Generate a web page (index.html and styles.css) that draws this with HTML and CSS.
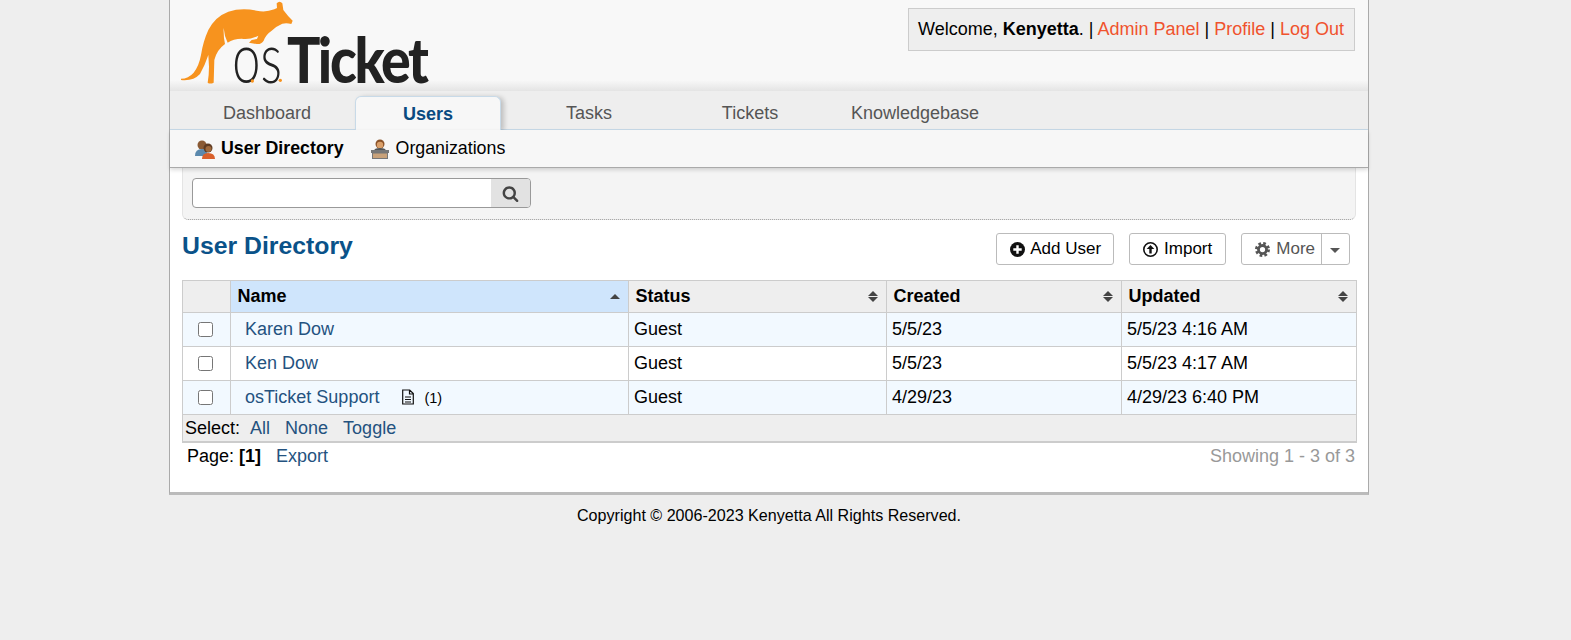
FILE: index.html
```html
<!DOCTYPE html>
<html lang="en">
<head>
  <meta charset="UTF-8">
  <title>osTicket :: User Directory</title>
  <link rel="stylesheet" href="styles.css">
</head>
<body>
  <div id="container">
    <div id="header">
      <svg class="logo" viewBox="0 0 780 273" role="img" aria-label="osTicket">
        <path class="roo" d="M18 236 Q40 236 56 218 Q72 198 78 165 Q84 125 100 90 Q120 50 160 35 Q200 22 245 32 Q272 38 298 28 L306 24 L305 10 Q314 0 322 10 L325 30 Q338 48 353 62 L349 72 Q335 68 322 71 Q305 78 290 92 Q272 104 266 122 Q258 134 245 132 L222 128 L230 120 L246 117 L250 107 Q225 120 200 116 Q175 116 158 128 L150 108 L146 84 Q145 110 150 132 Q125 150 118 180 L116 248 Q105 253 98 248 Q102 225 102 200 L100 165 Q90 195 75 222 Q55 244 18 240 Z"/>
        <text class="logo-os" transform="translate(172 248) scale(0.72 1)">os</text>
        <text class="logo-ticket" transform="translate(336 248) scale(0.885 1)">Ticket</text>
        <circle class="roo" cx="232" cy="243" r="5"/>
        <circle class="roo" cx="316" cy="241" r="5"/>
      </svg>
      <p class="info">Welcome, <strong>Kenyetta</strong>. | <a href="#">Admin Panel</a> | <a href="#">Profile</a> | <a href="#">Log Out</a></p>
    </div>

    <ul id="nav">
      <li><a href="#">Dashboard</a></li>
      <li class="active"><a href="#">Users</a></li>
      <li><a href="#">Tasks</a></li>
      <li><a href="#">Tickets</a></li>
      <li><a href="#">Knowledgebase</a></li>
    </ul>

    <ul id="sub_nav">
      <li class="active">
        <svg class="nav-icon" viewBox="0 0 22 20">
          <circle cx="8" cy="6" r="4.500" fill="#8a5a34"/>
          <path d="M1 17 Q1 10 8 10 Q12 10 13 14 L13 17 Z" fill="#5b89ad"/>
          <circle cx="14" cy="9" r="4.500" fill="#5f3b22"/>
          <circle cx="14.500" cy="10" r="3" fill="#a06a3c"/>
          <path d="M8 20 Q8 14 14 14 Q21 14 21 20 Z" fill="#d9602b"/>
        </svg>
        <a href="#">User Directory</a>
      </li>
      <li>
        <svg class="nav-icon" viewBox="0 0 22 20">
          <circle cx="11" cy="5" r="4.500" fill="#8a5228"/>
          <circle cx="11" cy="6" r="3.200" fill="#dba06a"/>
          <path d="M5 12 Q5 9 11 9 Q17 9 17 12 Z" fill="#555"/>
          <rect x="2" y="11" width="18" height="3" fill="#777"/>
          <rect x="3.500" y="14" width="15" height="5.500" fill="#c9a27a" stroke="#777"/>
        </svg>
        <a href="#">Organizations</a>
      </li>
    </ul>

    <div id="content">
      <div class="search-bar">
        <form class="search-box">
          <input type="text" class="search-input">
          <button type="button" class="search-btn">
            <svg class="icon" viewBox="0 0 1792 1792"><path d="M1216 832q0-185-131.500-316.500t-316.500-131.500-316.500 131.500-131.500 316.500 131.500 316.500 316.500 131.500 316.500-131.500 131.500-316.500zm512 832q0 52-38 90t-90 38q-54 0-90-38l-343-342q-179 124-399 124-143 0-273.500-55.500t-225-150-150-225-55.500-273.500 55.500-273.500 150-225 225-150 273.500-55.500 273.500 55.500 225 150 150 225 55.500 273.500q0 220-124 399l343 343q37 37 37 90z"/></svg>
          </button>
        </form>
      </div>

      <div class="title-row">
        <h2>User Directory</h2>
        <div class="actions">
          <a class="button btn-add" href="#">
            <svg class="icon" viewBox="0.500 0.500 15 15"><circle cx="8" cy="8" r="7.500"/><path class="cut" d="M6.800 3.800h2.400v3h3v2.400h-3v3H6.800v-3h-3V6.800h3z"/></svg>
            Add User
          </a>
          <a class="button" href="#">
            <svg class="icon" viewBox="0.500 0.500 15 15"><path fill-rule="evenodd" d="M8 .5a7.500 7.500 0 1 0 0 15 7.500 7.500 0 0 0 0-15zm0 1.600a5.900 5.900 0 1 1 0 11.800 5.900 5.900 0 0 1 0-11.800z"/><path d="M8 3.500 11.800 7.600 H9.200V12H6.800V7.600H4.200z"/></svg>
            Import
          </a>
          <span class="button split">
            <span class="split-main">
              <svg class="icon gear" viewBox="0 0 16 16"><circle cx="8" cy="8" r="4.300" fill="none" stroke-width="3"/><circle class="teeth" cx="8" cy="8" r="6.500" fill="none" stroke-width="3" stroke-dasharray="2.800 2.300"/></svg>
              More
            </span>
            <span class="split-caret"><i class="caret"></i></span>
          </span>
        </div>
      </div>

      <table class="list">
        <colgroup>
          <col class="col-check"><col class="col-name"><col class="col-status"><col class="col-created"><col class="col-updated">
        </colgroup>
        <thead>
          <tr>
            <th></th>
            <th class="sorted"><span class="th-in">Name <i class="sort-up"></i></span></th>
            <th><span class="th-in">Status <i class="sort"></i></span></th>
            <th><span class="th-in">Created <i class="sort"></i></span></th>
            <th><span class="th-in">Updated <i class="sort"></i></span></th>
          </tr>
        </thead>
        <tbody>
          <tr class="odd">
            <td class="check"><input type="checkbox"></td>
            <td class="name"><a href="#">Karen Dow</a></td>
            <td>Guest</td><td>5/5/23</td><td>5/5/23 4:16 AM</td>
          </tr>
          <tr>
            <td class="check"><input type="checkbox"></td>
            <td class="name"><a href="#">Ken Dow</a></td>
            <td>Guest</td><td>5/5/23</td><td>5/5/23 4:17 AM</td>
          </tr>
          <tr class="odd">
            <td class="check"><input type="checkbox"></td>
            <td class="name"><a href="#">osTicket Support</a>
              <span class="note">
                <svg class="file" viewBox="0 0 14 16"><path fill="none" stroke="#111" stroke-width="1.200" d="M1.700 1h7l3.600 3.600v10.400H1.700zM8.500 1v4h3.800M4 8h6M4 10.500h6M4 13h6"/></svg>
                <small>(1)</small>
              </span>
            </td>
            <td>Guest</td><td>4/29/23</td><td>4/29/23 6:40 PM</td>
          </tr>
        </tbody>
        <tfoot>
          <tr>
            <td colspan="5">Select: <a href="#">All</a> <a href="#">None</a> <a href="#">Toggle</a></td>
          </tr>
        </tfoot>
      </table>

      <div class="pager">
        <span>Page: <b>[1]</b> <a class="export" href="#">Export</a></span>
        <span class="showing">Showing 1 - 3 of 3</span>
      </div>
    </div>
  </div>

  <div id="footer">Copyright &copy; 2006-2023 Kenyetta All Rights Reserved.</div>
</body>
</html>
```

FILE: styles.css
```css
body {
  margin: 0;
  padding-right: 33px;
  background: #eee;
  color: #000;
  font-family: "Liberation Sans", Arial, sans-serif;
  font-size: 18px;
}
a {
  color: #24527f;
  text-decoration: none;
}
ul {
  list-style: none;
  margin: 0;
  padding: 0;
}
#container {
  width: 1200px;
  box-sizing: border-box;
  margin: 0 auto;
  background: #fff;
  border-left: 1px solid #aaa;
  border-right: 1px solid #aaa;
  border-bottom: 3px solid #bbb;
}

/* header */
#header {
  height: 91px;
  display: flex;
  justify-content: space-between;
  align-items: flex-start;
  padding: 0 13px 0 5px;
  box-sizing: border-box;
  background: linear-gradient(to bottom, #f8f8f8 0, #f8f8f8 80px, #e4e4e4 91px);
}
.logo {
  width: 260px;
  height: 91px;
  overflow: visible;
}
.roo {
  fill: #f7931e;
}
.logo-os {
  font-family: Lato, sans-serif;
  font-weight: 300;
  font-size: 210px;
  fill: #222;
}
.logo-ticket {
  font-family: Lato, sans-serif;
  font-weight: 900;
  font-size: 188px;
  letter-spacing: -8px;
  fill: #222;
}
.info {
  margin: 8px 0 0;
  padding: 0 10px 0 9px;
  height: 41px;
  line-height: 41px;
  background: #eee;
  border: 1px solid #ccc;
  white-space: nowrap;
}
.info a {
  color: #f0532d;
}

/* tabs */
#nav {
  display: flex;
  height: 39px;
  box-sizing: border-box;
  padding: 5px 0 0 24px;
  background: #eee;
  border-bottom: 1px solid #c8dae8;
}
#nav li {
  min-width: 146px;
  margin-right: 15px;
  height: 34px;
  box-sizing: border-box;
  padding: 0 13px;
  text-align: center;
  line-height: 34px;
}
#nav a {
  color: #555;
}
#nav .active {
  background: #f7f7f7;
  border: 1px solid #c8dae8;
  border-bottom: none;
  border-radius: 6px 6px 0 0;
  box-shadow: 3px 1px 5px rgba(0, 0, 0, 0.2);
}
#nav .active a {
  color: #0a4a80;
  font-weight: bold;
}
#sub_nav {
  display: flex;
  align-items: center;
  gap: 25px;
  height: 38px;
  box-sizing: border-box;
  padding: 0 0 0 24px;
  background: #f7f7f7;
  border-bottom: 1px solid #aaa;
  box-shadow: 0 2px 4px rgba(0, 0, 0, 0.15);
  position: relative;
}
#sub_nav li {
  display: flex;
  align-items: center;
  gap: 5px;
}
#sub_nav a {
  color: #000;
  font-size: 17.8px;
}
#sub_nav .active a {
  font-weight: bold;
}
.nav-icon {
  width: 22px;
  height: 20px;
}

/* content */
#content {
  padding: 0 10px 25px 12px;
}
.search-bar {
  height: 52px;
  margin-right: 2px;
  box-sizing: border-box;
  padding: 10px 9px 0;
  background: #f4f4f4;
  border-bottom: 1px dotted #999;
  border-left: 1px solid #e4e4e4;
  border-right: 1px solid #e4e4e4;
  border-radius: 0 0 6px 6px;
}
.search-box {
  display: flex;
  width: 339px;
  height: 30px;
  box-sizing: border-box;
  background: #fff;
  border: 1px solid #999;
  border-radius: 4px;
  overflow: hidden;
}
.search-input {
  flex: 1;
  min-width: 0;
  border: none;
  outline: none;
  background: transparent;
}
.search-btn {
  width: 39px;
  border: none;
  padding: 0;
  background: #e2e2e2;
}
.search-btn .icon {
  width: 17px;
  height: 17px;
  fill: #444;
  vertical-align: middle;
}
.title-row {
  display: flex;
  justify-content: space-between;
  align-items: flex-start;
  height: 60px;
  padding-top: 13px;
  box-sizing: border-box;
}
h2 {
  margin: 0;
  font-size: 24.8px;
  line-height: 26px;
  color: #0a5289;
}
.actions {
  display: flex;
  gap: 15px;
  padding-right: 8px;
}
.button {
  display: flex;
  align-items: center;
  gap: 6px;
  height: 32px;
  box-sizing: border-box;
  padding: 0 13px;
  background: #fff;
  border: 1px solid #bbb;
  border-radius: 3px;
  color: #000;
  font-size: 17px;
}
.btn-add {
  padding-right: 12px;
  gap: 5px;
}
.icon {
  width: 15px;
  height: 15px;
  fill: #111;
}
.icon .cut {
  fill: #fff;
}
.split {
  padding: 0;
  gap: 0;
  color: #555;
}
.split-main {
  display: flex;
  align-items: center;
  gap: 6px;
  height: 100%;
  padding: 0 6px 0 13px;
  border-right: 1px solid #bbb;
}
.split-caret {
  display: flex;
  align-items: center;
  padding: 0 9px 0 8px;
  height: 100%;
}
.caret {
  width: 0;
  height: 0;
  border-left: 5px solid transparent;
  border-right: 5px solid transparent;
  border-top: 5px solid #555;
  margin-top: 2px;
}
.gear {
  stroke: #555;
  fill: none;
}

/* table */
.list {
  width: 1175px;
  table-layout: fixed;
  border-collapse: collapse;
  border: 1px solid #ccc;
  border-bottom: 2px solid #ccc;
}
.col-check { width: 48px; }
.col-name { width: 398px; }
.col-status { width: 258px; }
.col-created { width: 235px; }
.list th,
.list td {
  border: 1px solid #ccc;
  text-align: left;
  padding: 0 5px;
  height: 33px;
}
.list th {
  height: 31px;
  padding: 0 8px 0 6.5px;
  background: #eee;
}
.list th.sorted {
  background: #cfe5fc;
}
.th-in {
  display: flex;
  justify-content: space-between;
  align-items: center;
}
.sort,
.sort-up {
  width: 0;
  height: 0;
  border-left: 5px solid transparent;
  border-right: 5px solid transparent;
  border-bottom: 5px solid #444;
}
.sort {
  position: relative;
  top: -3px;
}
.sort::after {
  content: "";
  position: absolute;
  left: -5px;
  top: 6px;
  border-left: 5px solid transparent;
  border-right: 5px solid transparent;
  border-top: 5px solid #444;
}
.odd td {
  background: #f2f9ff;
}
.list td.check {
  text-align: center;
  padding: 0 2px 0 0;
}
.check input {
  width: 15px;
  height: 15px;
  margin: 4px 0 0;
}
.list td.name {
  padding-left: 14px;
}
.note {
  margin-left: 17px;
}
.file {
  width: 14px;
  height: 16px;
  vertical-align: -2px;
}
.note small {
  font-size: 14.5px;
  margin-left: 4px;
}
.list tfoot td {
  height: 26px;
  background: #eee;
  padding: 0 2px;
}
.list tfoot a {
  margin-left: 10px;
}
.list tfoot a:first-of-type {
  margin-left: 5px;
}
.pager {
  display: flex;
  justify-content: space-between;
  padding: 2px 3px 0 5px;
  line-height: 22px;
}
.export {
  margin-left: 10px;
}
.showing {
  color: #999;
}
#footer {
  width: 1200px;
  margin: 10px auto 0;
  text-align: center;
  font-size: 16.1px;
  line-height: 20px;
}
```
